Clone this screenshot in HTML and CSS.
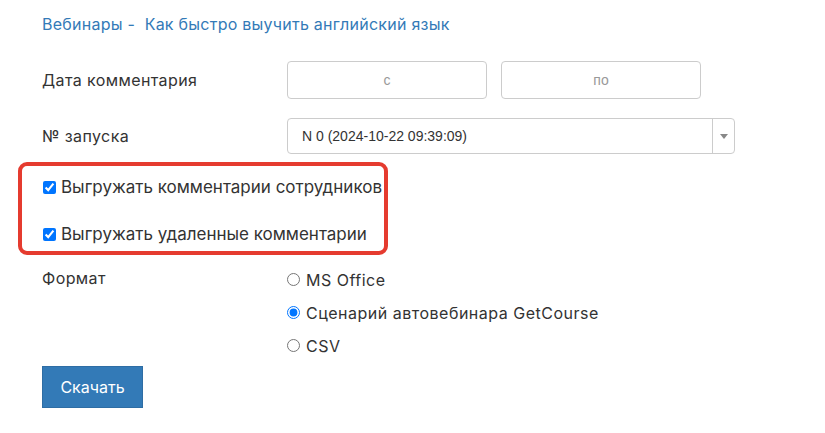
FILE: index.html
```html
<!DOCTYPE html>
<html lang="ru">
<head>
<meta charset="utf-8">
<title>Экспорт комментариев</title>
<link rel="stylesheet" href="styles.css">
</head>
<body>
<div class="page">
  <div class="title"><a href="#" class="link">Вебинары</a> - &nbsp;<a href="#" class="link">Как быстро выучить английский язык</a></div>

  <div class="row row-dates">
    <div class="label">Дата комментария</div>
    <div class="dates">
      <input class="field" type="text" placeholder="с">
      <input class="field" type="text" placeholder="по">
    </div>
  </div>

  <div class="row row-launch">
    <div class="label">№ запуска</div>
    <div class="select">
      <span class="select-text">N 0 (2024-10-22 09:39:09)</span>
      <span class="select-arrow"><span class="tri"></span></span>
    </div>
  </div>

  <div class="highlight">
    <label class="check"><input type="checkbox" checked> Выгружать комментарии сотрудников</label>
    <label class="check"><input type="checkbox" checked> Выгружать удаленные комментарии</label>
  </div>

  <div class="row row-format">
    <div class="label label-top">Формат</div>
    <div class="radios">
      <label class="radio"><input type="radio" name="fmt"> MS Office</label>
      <label class="radio"><input type="radio" name="fmt" checked> Сценарий автовебинара GetCourse</label>
      <label class="radio"><input type="radio" name="fmt"> CSV</label>
    </div>
  </div>

  <button class="btn" type="button">Скачать</button>
</div>
</body>
</html>
```

FILE: styles.css
```css
* { box-sizing: border-box; }
html, body { margin: 0; background: #fff; }
body {
  font-family: Inter, "Noto Sans", "DejaVu Sans", sans-serif;
  color: #333;
  font-size: 16px;
}
.page {
  padding: 14px 0 0 42px;
}
.title {
  font-size: 16px;
  line-height: 20px;
  letter-spacing: 0.25px;
  color: #337ab7;
}
.link { color: #337ab7; text-decoration: none; }

.row {
  display: flex;
  align-items: center;
}
.label {
  width: 245px;
  flex: none;
  font-size: 16px;
  line-height: 22px;
  letter-spacing: 0.4px;
}
.row-dates { margin-top: 27px; }
.dates { display: flex; gap: 14px; }
.field {
  width: 200px;
  height: 38px;
  border: 1px solid #ccc;
  border-radius: 4px;
  text-align: center;
  font-family: "Liberation Sans", Arial, sans-serif;
  font-size: 14px;
  color: #555;
  padding: 0 8px;
  margin: 0;
}
.field::placeholder { color: #999; }

.row-launch { margin-top: 19px; }
.select {
  width: 448px;
  height: 36px;
  border: 1px solid #ccc;
  border-radius: 4px;
  display: flex;
  align-items: center;
  font-family: "Liberation Sans", Arial, sans-serif;
  font-size: 14px;
  color: #333;
}
.select-text { flex: 1; padding-left: 14px; }
.select-arrow {
  width: 22px;
  height: 100%;
  border-left: 1px solid #ccc;
  display: flex;
  align-items: center;
  justify-content: center;
}
.tri {
  width: 0; height: 0;
  border-left: 4px solid transparent;
  border-right: 4px solid transparent;
  border-top: 5px solid #888;
}

.highlight {
  margin: 8px 0 0 -24px;
  width: 370px;
  border: 4px solid #e53b2f;
  border-radius: 9px;
  padding: 10px 0 6px 21px;
  display: flex;
  flex-direction: column;
  gap: 25px;
}
.check {
  display: flex;
  align-items: center;
  gap: 5px;
  font-size: 17px;
  line-height: 22px;
  letter-spacing: 0;
  white-space: nowrap;
  color: #333;
}
.check input { margin: 0; width: 13px; height: 13px; flex: none; }

.row-format { margin-top: 8px; align-items: flex-start; }
.label-top { line-height: 30px; }
.radios { display: flex; flex-direction: column; }
.radio {
  display: flex;
  align-items: center;
  gap: 6px;
  height: 33px;
  font-size: 16px;
  letter-spacing: 0.5px;
  white-space: nowrap;
  color: #333;
}
.radio input { margin: 0; width: 13px; height: 13px; flex: none; }

.btn {
  margin-top: 4px;
  width: 101px;
  height: 42px;
  background: #337ab7;
  border: 1px solid #2e6da4;
  color: #fff;
  font-family: Inter, "Noto Sans", sans-serif;
  font-size: 16px;
  padding: 0;
  border-radius: 0;
}
```
